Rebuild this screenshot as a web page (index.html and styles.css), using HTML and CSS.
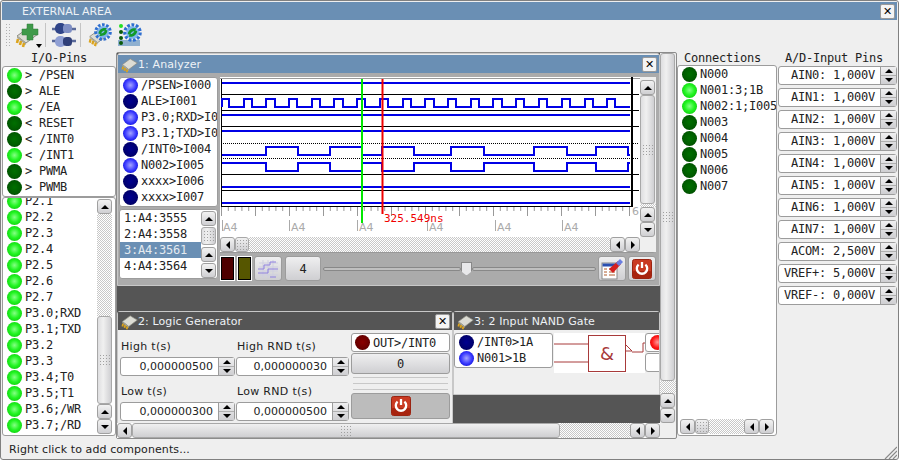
FILE: index.html

```html
<!DOCTYPE html>
<html lang="en">
<head>
  <meta charset="UTF-8" />
  <title>EXTERNAL AREA</title>
  <link rel="stylesheet" href="styles.css">
</head>
<body>
<svg class="defs" width="0" height="0">
  <symbol id="chip" viewBox="0 0 24 24">
    <polygon points="2,12 13,4 23,10 11,19" fill="#dcdcd4" stroke="#8a8a80"/>
    <polygon points="2,12 11,19 11,21 2,14" fill="#a8a89c"/>
    <path d="M3 15l-1 4M6 17l-1 4M9 19l-1 4" stroke="#dba41e" stroke-width="2.600"/>
  </symbol>
  <symbol id="gear" viewBox="0 0 24 24">
    <circle cx="12" cy="12" r="9.500" fill="none" stroke="#2f6fd0" stroke-width="4.500" stroke-dasharray="3.400 2"/>
    <circle cx="12" cy="12" r="8" fill="#7fb4ec"/>
    <path d="M6 14c1-6 6-8 11-7l-2 3c-3 0-5 2-6 5zM18 10c-1 6-6 8-11 7l2-3c3 0 5-2 6-5z" fill="#129a2a"/>
  </symbol>
  <symbol id="power" viewBox="0 0 20 20">
    <rect x="0.500" y="0.500" width="19" height="19" rx="2" fill="#c93a22" stroke="#9a2412"/>
    <rect x="1" y="12" width="18" height="7" rx="1" fill="#a8240f"/>
    <path d="M6.600 5.600a5.200 5.200 0 1 0 6.800 0" fill="none" stroke="#fff" stroke-width="2.300"/>
    <path d="M10 3v6" stroke="#fff" stroke-width="2.300"/>
  </symbol>
</svg>

<div class="win">
  <header class="titlebar">
    <span class="title-text main-title">EXTERNAL AREA</span>
    <span class="close">✕</span>
  </header>

  <div class="toolbar">
    <span class="handle"></span>
    <svg class="tb-icon first" width="26" height="26" viewBox="0 0 26 26">
      <use href="#chip" x="0" y="2" width="24" height="24"/>
      <path d="M12 2h6v5h5v6h-5v5h-6v-5H7V7h5z" fill="#3f9a4a" stroke="#2f7a3a" stroke-width=".5"/>
    </svg>
    <span class="drop"></span>
    <span class="tb-sep"></span>
    <svg class="tb-icon plug" width="24" height="24" viewBox="0 0 24 24">
      <path d="M0 6h5M18 6h6" stroke="#5a6a9a" stroke-width="2.500"/>
      <rect x="3" y="0" width="11" height="11" rx="5" fill="#2f4488"/>
      <rect x="11" y="1" width="9" height="9" rx="3.500" fill="#7f8fc4"/>
      <path d="M0 18h5M18 18h6" stroke="#5a6a9a" stroke-width="2.500"/>
      <rect x="3" y="13" width="11" height="11" rx="5" fill="#8f9fd4"/>
      <rect x="11" y="14" width="9" height="9" rx="3.500" fill="#2f3f78"/>
    </svg>
    <span class="tb-sep"></span>
    <svg class="tb-icon chip-gear" width="24" height="24" viewBox="0 0 24 24">
      <use href="#chip" x="0" y="3" width="21" height="21"/>
      <use href="#gear" x="6" y="0" width="18" height="18"/>
    </svg>
    <svg class="tb-icon led-gear" width="24" height="24" viewBox="0 0 24 24">
      <rect x="0" y="17" width="22" height="6" fill="#8fb0d0"/>
      <circle cx="3" cy="3" r="2" fill="#22e022"/>
      <circle cx="3" cy="9" r="2" fill="#0a5a0a"/>
      <circle cx="3" cy="15" r="2" fill="#0a5a0a"/>
      <circle cx="3" cy="20" r="2" fill="#0a5a0a"/>
      <use href="#gear" x="5" y="0" width="19" height="19"/>
    </svg>
  </div>

  <div class="main">
    <div class="left">
      <div class="col-label center">I/O-Pins</div>
      <div class="list ext-pins">
        <div class="row"><i class="led on"></i>&gt; /PSEN</div>
        <div class="row"><i class="led off"></i>&gt; ALE</div>
        <div class="row"><i class="led on"></i>&lt; /EA</div>
        <div class="row"><i class="led off"></i>&lt; RESET</div>
        <div class="row"><i class="led off"></i>&lt; /INT0</div>
        <div class="row"><i class="led on"></i>&lt; /INT1</div>
        <div class="row"><i class="led off"></i>&gt; PWMA</div>
        <div class="row"><i class="led off"></i>&gt; PWMB</div>
      </div>
      <div class="list port-pins">
        <div class="port-rows">
          <div class="row"><i class="led on"></i>P2.1</div>
          <div class="row"><i class="led on"></i>P2.2</div>
          <div class="row"><i class="led on"></i>P2.3</div>
          <div class="row"><i class="led on"></i>P2.4</div>
          <div class="row"><i class="led on"></i>P2.5</div>
          <div class="row"><i class="led on"></i>P2.6</div>
          <div class="row"><i class="led on"></i>P2.7</div>
          <div class="row"><i class="led on"></i>P3.0;RXD</div>
          <div class="row"><i class="led on"></i>P3.1;TXD</div>
          <div class="row"><i class="led on"></i>P3.2</div>
          <div class="row"><i class="led on"></i>P3.3</div>
          <div class="row"><i class="led on"></i>P3.4;T0</div>
          <div class="row"><i class="led on"></i>P3.5;T1</div>
          <div class="row"><i class="led on"></i>P3.6;/WR</div>
          <div class="row"><i class="led on"></i>P3.7;/RD</div>
        </div>
        <div class="vscroll port-scroll">
          <span class="sb up"></span>
          <span class="trough t-port"></span>
          <span class="thumb t-grow"><b class="grip"></b></span>
          <span class="sb up"></span>
          <span class="sb down"></span>
        </div>
      </div>
    </div>

    <div class="mdi">
      <div class="desk">

        <section class="sub w-analyzer">
          <div class="subtitle active">
            <svg class="chip-ico" width="17" height="17"><use href="#chip"/></svg>
            <span class="title-text">1: Analyzer</span>
            <span class="close">✕</span>
          </div>
          <div class="an-body">
            <div class="an-left">
              <div class="list an-pins">
                <div class="row"><i class="led b-on"></i>/PSEN&gt;I000</div>
                <div class="row"><i class="led b-off"></i>ALE&gt;I001</div>
                <div class="row"><i class="led b-on"></i>P3.0;RXD&gt;I002</div>
                <div class="row"><i class="led b-on"></i>P3.1;TXD&gt;I003</div>
                <div class="row"><i class="led b-off"></i>/INT0&gt;I004</div>
                <div class="row"><i class="led b-on"></i>N002&gt;I005</div>
                <div class="row"><i class="led b-off"></i>xxxx&gt;I006</div>
                <div class="row"><i class="led b-off"></i>xxxx&gt;I007</div>
              </div>
              <div class="list an-marks">
                <div class="mark-rows">
                  <div class="row">1:A4:3555</div>
                  <div class="row">2:A4:3558</div>
                  <div class="row selected">3:A4:3561</div>
                  <div class="row">4:A4:3564</div>
                </div>
                <div class="vscroll">
                  <span class="sb up"></span>
                  <span class="thumb t-grow"><b class="grip"></b></span>
                  <span class="sb up"></span>
                  <span class="sb down"></span>
                </div>
              </div>
            </div>
            <div class="an-right">
              <div class="plot">
                <svg class="wave" width="420" height="160" viewBox="220 77 420 160">
                  <rect x="220" y="77" width="420" height="160" fill="#fff"/>
                  <path d="M220 78.500H640" stroke="#999"/>
                  <path d="M221 94.500H639M221 110.500H639M221 126.500H639M221 174.500H639M221 190.500H639M221 206.500H632" stroke="#000"/>
                  <path d="M221 143.500H639M221 158.500H639" stroke="#000" stroke-dasharray="1 1"/>
                  <path d="M221.500 79V207" stroke="#000"/>
                  <g class="trace">
                    <path d="M222 83H630M222 115H630M222 131H630M222 187H630M222 203H630"/>
                    <path d="M222 107V99H229V107H244V99H252V107H266V99H275V107H289V99H297V107H312V99H320V107H334V99H343V107H357V99H365V107H380V99H388V107H403V99H411V107H425V99H434V107H448V99H456V107H471V99H479V107H493V99H502V107H516V99H524V107H539V99H547V107H562V99H570V107H585V99H593V107H607V99H615V107H630"/>
                    <path d="M222 155H266V147H298V155H330V147H362V155H382V147H414V155H451V147H484V155H534V147H567V155H596V147H628V155H630"/>
                    <path d="M222 163H266V171H298V163H330V171H362V163H382V171H414V163H451V171H484V163H534V171H567V163H596V171H628V163H630"/>
                  </g>
                  <rect x="631" y="77" width="2" height="130" fill="#000"/>
                  <line class="tick" x1="221" x2="632" y1="209" y2="209" stroke-width="4" stroke-dasharray="1 5.800"/>
                  <line class="tick" x1="221" x2="632" y1="213" y2="213" stroke-width="6" stroke-dasharray="1 33"/>
                  <path d="M222.500 220V231M289.500 220V231M357.500 220V231M427.500 220V231M495.500 220V231M562.500 220V231" stroke="#aaa"/>
                  <text class="ruler" x="223" y="231">A4</text>
                  <text class="ruler" x="291" y="231">A4</text>
                  <text class="ruler" x="359" y="231">A4</text>
                  <text class="ruler" x="429" y="231">A4</text>
                  <text class="ruler" x="497" y="231">A4</text>
                  <text class="ruler" x="564" y="231">A4</text>
                  <text class="ruler" x="632" y="215">6</text>
                  <rect x="361" y="79" width="2" height="144" fill="#00e800"/>
                  <rect x="381.500" y="79" width="2" height="135" fill="#f00000"/>
                  <text class="cursor-time" x="384" y="222">325.549ns</text>
                </svg>
                <div class="vscroll an-v">
                  <span class="sb up"></span>
                  <span class="thumb t-grow"><b class="grip"></b></span>
                  <span class="trough t-2"></span>
                  <span class="sb up"></span>
                  <span class="sb down"></span>
                </div>
                <div class="hscroll an-h">
                  <span class="sb lf"></span>
                  <span class="thumb t-h20"><b class="grip"></b></span>
                  <span class="trough t-grow"></span>
                  <span class="sb lf"></span>
                  <span class="sb rt"></span>
                </div>
                <span class="corner"></span>
              </div>
              <div class="an-ctrl">
                <span class="swatch sw-red"></span>
                <span class="swatch sw-olive"></span>
                <span class="btn b-icon">
                  <svg width="24" height="20" viewBox="0 0 24 20">
                    <path d="M3 4H22M3 8H22M3 12H22M3 16H22M7 1V19M12 1V19M17 1V19" stroke="#cfcfe0"/>
                    <path d="M2 10H8V6H14V3H20M2 14H12V10H22M14 18H20" fill="none" stroke="#8f80e0"/>
                  </svg>
                </span>
                <span class="btn num">4</span>
                <span class="slider">
                  <span class="groove g-left"></span>
                  <span class="slide-thumb"></span>
                  <span class="groove"></span>
                </span>
                <span class="btn b-icon">
                  <svg width="24" height="22" viewBox="0 0 24 22">
                    <rect x="2" y="5" width="15" height="16" fill="#fff" stroke="#888"/>
                    <rect x="2.500" y="5.500" width="14" height="3" fill="#2a4fb0"/>
                    <path d="M4 11h3M9 11h6M4 14h3M9 14h6M4 17h3M9 17h6" stroke="#b05a2a"/>
                    <path d="M9 11L18 3l3 3-8 9z" fill="#d42020"/>
                    <path d="M16 5l4-4 3 3-4 4z" fill="#6a7fe0"/>
                  </svg>
                </span>
                <span class="btn b-icon">
                  <svg width="20" height="20"><use href="#power"/></svg>
                </span>
              </div>
            </div>
          </div>
        </section>

        <section class="sub w-logic">
          <div class="subtitle">
            <svg class="chip-ico" width="17" height="17"><use href="#chip"/></svg>
            <span class="title-text">2: Logic Generator</span>
            <span class="close">✕</span>
          </div>
          <div class="lg-body">
            <div class="lg-fields">
              <div class="field">
                <label>High t(s)</label>
                <div class="spin"><span class="spin-val">0,000000500</span><span class="spin-btns"><b class="up"></b><b class="down"></b></span></div>
              </div>
              <div class="field">
                <label>High RND t(s)</label>
                <div class="spin"><span class="spin-val">0,000000030</span><span class="spin-btns"><b class="up"></b><b class="down"></b></span></div>
              </div>
              <div class="field">
                <label>Low t(s)</label>
                <div class="spin"><span class="spin-val">0,000000300</span><span class="spin-btns"><b class="up"></b><b class="down"></b></span></div>
              </div>
              <div class="field">
                <label>Low RND t(s)</label>
                <div class="spin"><span class="spin-val">0,000000500</span><span class="spin-btns"><b class="up"></b><b class="down"></b></span></div>
              </div>
            </div>
            <div class="lg-side">
              <div class="list out-pin"><div class="row"><i class="led r-off"></i>OUT&gt;/INT0</div></div>
              <span class="btn lg-zero">0</span>
              <span class="lines"></span>
              <span class="btn lg-power"><svg width="20" height="20"><use href="#power"/></svg></span>
            </div>
          </div>
        </section>

        <section class="sub w-gate">
          <div class="subtitle">
            <svg class="chip-ico" width="17" height="17"><use href="#chip"/></svg>
            <span class="title-text">3: 2 Input NAND Gate</span>
          </div>
          <div class="gate-body">
            <div class="list gate-pins">
              <div class="row"><i class="led b-off"></i>/INT0&gt;1A</div>
              <div class="row"><i class="led b-on"></i>N001&gt;1B</div>
            </div>
            <svg class="gate" width="91" height="40" viewBox="0 0 91 40">
              <rect width="91" height="40" fill="#fff"/>
              <path d="M0 11H34M0 29H34" stroke="#a83a3a" fill="none"/>
              <rect x="34.500" y="2.500" width="37" height="36" fill="#fff" stroke="#a83a3a"/>
              <text class="amp" x="53" y="27">&amp;</text>
              <path d="M72 12l6 6h-6M78 19H89V10H91" stroke="#a83a3a" fill="none"/>
            </svg>
            <div class="gate-out">
              <div class="list out-box"><i class="led r-on"></i></div>
              <div class="list out-box"></div>
            </div>
          </div>
        </section>

      </div>
      <div class="vscroll mdi-v">
        <span class="thumb t-grow"><b class="grip"></b></span>
        <span class="trough t-mdi"></span>
        <span class="sb up"></span>
        <span class="sb down"></span>
      </div>
      <div class="hscroll mdi-h">
        <span class="sb lf"></span>
        <span class="thumb t-grow"><b class="grip"></b></span>
        <span class="trough t-h70"></span>
        <span class="sb lf"></span>
        <span class="sb rt"></span>
      </div>
    </div>

    <div class="conn">
      <div class="col-label pad">Connections</div>
      <div class="list conn-list">
        <div class="row"><i class="led off"></i>N000</div>
        <div class="row"><i class="led on"></i>N001:3;1B</div>
        <div class="row"><i class="led on"></i>N002:1;I005</div>
        <div class="row"><i class="led off"></i>N003</div>
        <div class="row"><i class="led off"></i>N004</div>
        <div class="row"><i class="led off"></i>N005</div>
        <div class="row"><i class="led off"></i>N006</div>
        <div class="row"><i class="led off"></i>N007</div>
        <div class="hscroll conn-h">
          <span class="sb lf"></span>
          <span class="thumb t-h34"><b class="grip"></b></span>
          <span class="trough t-grow"></span>
          <span class="sb lf"></span>
          <span class="sb rt"></span>
        </div>
      </div>
    </div>

    <div class="adc">
      <div class="col-label pad">A/D-Input Pins</div>
      <div class="spin adc-spin"><span class="spin-val">AIN0: 1,000V</span><span class="spin-btns"><b class="up"></b><b class="down"></b></span></div>
      <div class="spin adc-spin"><span class="spin-val">AIN1: 1,000V</span><span class="spin-btns"><b class="up"></b><b class="down"></b></span></div>
      <div class="spin adc-spin"><span class="spin-val">AIN2: 1,000V</span><span class="spin-btns"><b class="up"></b><b class="down"></b></span></div>
      <div class="spin adc-spin"><span class="spin-val">AIN3: 1,000V</span><span class="spin-btns"><b class="up"></b><b class="down"></b></span></div>
      <div class="spin adc-spin"><span class="spin-val">AIN4: 1,000V</span><span class="spin-btns"><b class="up"></b><b class="down"></b></span></div>
      <div class="spin adc-spin"><span class="spin-val">AIN5: 1,000V</span><span class="spin-btns"><b class="up"></b><b class="down"></b></span></div>
      <div class="spin adc-spin"><span class="spin-val">AIN6: 1,000V</span><span class="spin-btns"><b class="up"></b><b class="down"></b></span></div>
      <div class="spin adc-spin"><span class="spin-val">AIN7: 1,000V</span><span class="spin-btns"><b class="up"></b><b class="down"></b></span></div>
      <div class="spin adc-spin"><span class="spin-val">ACOM: 2,500V</span><span class="spin-btns"><b class="up"></b><b class="down"></b></span></div>
      <div class="spin adc-spin"><span class="spin-val">VREF+: 5,000V</span><span class="spin-btns"><b class="up"></b><b class="down"></b></span></div>
      <div class="spin adc-spin"><span class="spin-val">VREF-: 0,000V</span><span class="spin-btns"><b class="up"></b><b class="down"></b></span></div>
    </div>
  </div>

  <footer class="status">
    <span>Right click to add components...</span>
    <svg class="size-grip" width="13" height="13" viewBox="0 0 13 13">
      <path d="M1 13L13 1M5 13L13 5M9 13L13 9" stroke="#8a8a8a" stroke-width="1.200"/>
    </svg>
  </footer>
</div>
</body>
</html>
```

FILE: styles.css

```css
* {
  box-sizing: border-box;
}
html, body {
  margin: 0;
  background: #fff;
}
.defs {
  position: absolute;
}
.win {
  width: 899px;
  height: 460px;
  border: 1px solid #808080;
  border-radius: 3px;
  padding: 1px 1px 0;
  background: #efefef;
  font-family: "DejaVu Sans", sans-serif;
  font-size: 11px;
  color: #222;
  overflow: hidden;
}

/* title bars */
.titlebar {
  height: 18px;
  background: #6a8fb4;
  display: flex;
  align-items: center;
  justify-content: space-between;
  padding: 0 2px 0 20px;
}
.title-text {
  color: #eef2f6;
  font-size: 11px;
  letter-spacing: 0.1px;
}
.main-title {
  letter-spacing: -0.1px;
}
.close {
  width: 15px;
  height: 15px;
  background: #f4f4f4;
  border: 1px solid #999;
  border-radius: 2px;
  color: #000;
  font-size: 11px;
  line-height: 13px;
  text-align: center;
}

/* toolbar */
.toolbar {
  height: 30px;
  display: flex;
  align-items: center;
  padding-left: 3px;
}
.handle {
  width: 6px;
  height: 24px;
  background: radial-gradient(#b0b0b0 0.8px, transparent 1px) 0 0/3px 3px;
}
.tb-icon.first {
  margin-left: 4px;
}
.drop {
  width: 0;
  height: 0;
  margin: 22px 0 0 -5px;
  border: 3px solid transparent;
  border-top: 4px solid #000;
  border-bottom: 0;
}
.tb-sep {
  width: 1px;
  height: 24px;
  background: #c4c4c4;
  margin-left: 3px;
}
.plug {
  margin-left: 6px;
}
.plug + .tb-sep {
  margin-left: 4px;
}
.chip-gear {
  margin-left: 7px;
}
.led-gear {
  margin-left: 6px;
}

/* columns */
.main {
  display: flex;
  height: 389px;
}
.left {
  width: 114px;
  display: flex;
  flex-direction: column;
}
.col-label {
  height: 16px;
  font-family: "DejaVu Sans Mono", monospace;
  font-size: 12px;
  letter-spacing: -0.22px;
  line-height: 17px;
}
.center {
  text-align: center;
}
.pad {
  padding-left: 7px;
}

/* lists */
.list {
  background: #fff;
  border: 1px solid #9c9c9c;
  border-radius: 3px;
  font-family: "DejaVu Sans Mono", monospace;
  font-size: 12px;
  letter-spacing: -0.22px;
  overflow: hidden;
}
.row {
  height: 16px;
  display: flex;
  align-items: center;
  gap: 3px;
  padding-left: 4px;
  white-space: nowrap;
  flex: none;
}
.ext-pins {
  height: 131px;
}
.port-pins {
  height: 239px;
  display: flex;
}
.port-rows {
  flex: 1;
  margin-top: -5px;
}
.led {
  width: 15px;
  height: 15px;
  border-radius: 50%;
  flex: none;
  display: block;
}
.on {
  background: radial-gradient(circle at 50% 48%, #86ff86 0, #22f522 45%, #0fd00f 78%, #3c9a3c 100%);
}
.off {
  background: radial-gradient(circle at 50% 48%, #007000 0, #005c00 55%, #003c00 90%, #4a7a4a 100%);
}
.b-on {
  background: radial-gradient(circle at 50% 48%, #a4a4ff 0, #3a3aff 50%, #1010d8 80%, #3c3c9a 100%);
}
.b-off {
  background: radial-gradient(circle at 50% 48%, #000090 0, #00006e 60%, #00004a 90%, #4a4a7a 100%);
}
.r-off {
  background: radial-gradient(circle at 50% 48%, #8a0000 0, #6a0000 60%, #400000 90%, #7a4a4a 100%);
}
.r-on {
  background: radial-gradient(circle at 50% 48%, #ff9a9a 0, #ff1a1a 50%, #d80000 85%, #9a3c3c 100%);
}

/* scrollbars */
.vscroll, .hscroll {
  display: flex;
  flex: none;
}
.vscroll {
  flex-direction: column;
  width: 16px;
}
.hscroll {
  height: 15px;
}
.sb {
  width: 15px;
  height: 15px;
  flex: none;
  border: 1px solid #a0a0a0;
  border-radius: 3px;
  background: linear-gradient(#f2f2f2, #cfcfd2);
  display: flex;
  align-items: center;
  justify-content: center;
}
.sb::after {
  content: "";
  width: 0;
  height: 0;
  border: 4px solid transparent;
}
.sb.up::after {
  border-top: 0;
  border-bottom: 4px solid #000;
}
.sb.down::after {
  border-bottom: 0;
  border-top: 4px solid #000;
}
.sb.lf::after {
  border-left: 0;
  border-right: 4px solid #000;
}
.sb.rt::after {
  border-right: 0;
  border-left: 4px solid #000;
}
.thumb {
  display: flex;
  align-items: center;
  justify-content: center;
  width: 15px;
  background: linear-gradient(90deg, #dedee0, #f0f0f0 40%, #cfcfd2);
  border: 1px solid #a8a8a8;
  border-radius: 3px;
  flex: none;
}
.hscroll .thumb {
  width: auto;
  background: linear-gradient(#f0f0f0, #cfcfd2);
}
.grip {
  width: 12px;
  height: 12px;
  background: radial-gradient(#a0a0a0 0.7px, transparent 1px) 0 0/3px 3px;
}
.trough {
  display: block;
  flex: none;
  background: repeating-conic-gradient(#c8c8c8 0 25%, #fff 0 50%) 0 0/2px 2px;
}
.t-grow {
  flex: 1;
}
.t-port {
  height: 102px;
}
.t-2 {
  height: 3px;
}
.t-mdi {
  height: 12px;
}
.t-h20 {
  width: 21px;
}
.t-h34 {
  width: 34px;
}
.t-h70 {
  width: 70px;
}
.port-scroll {
  margin: 1px 3px 1px 0;
  width: 15px;
}

/* workspace */
.mdi {
  width: 561px;
  height: 387px;
  margin-top: 2px;
  border: 1px solid #8c8c8c;
  border-radius: 2px;
  display: grid;
  grid-template-columns: 543px 16px;
  grid-template-rows: 370px 15px;
  background: #efefef;
}
.desk {
  position: relative;
  background: #555;
  overflow: hidden;
}
.mdi-h {
  background: #fff;
}
.sub {
  position: absolute;
  background: #efefef;
  border: 1px solid #c8c8c8;
  border-radius: 3px 3px 0 0;
}
.subtitle {
  height: 18px;
  background: #555;
  display: flex;
  align-items: center;
  padding: 0 2px 0 3px;
  position: relative;
}
.subtitle.active {
  background: #6a8fb4;
}
.subtitle .close {
  margin-left: auto;
}
.chip-ico {
  flex: none;
}
.w-analyzer {
  left: 0;
  top: 0;
  width: 543px;
  height: 233px;
  padding-top: 1px;
}
.w-logic {
  left: 0;
  top: 258px;
  width: 336px;
  height: 114px;
}
.w-gate {
  left: 336px;
  top: 258px;
  width: 207px;
  height: 84px;
}

/* analyzer */
.an-body {
  height: 212px;
  background: #ababab;
  display: flex;
  padding: 4px 0 0 1px;
  gap: 2px;
}
.an-left {
  width: 99px;
  display: flex;
  flex-direction: column;
  gap: 2px;
}
.an-pins {
  height: 130px;
}
.an-pins .row:first-child {
  margin-top: -1px;
}
.an-pins .row, .out-pin .row {
  padding-left: 3px;
}
.an-marks {
  height: 70px;
  display: flex;
}
.mark-rows {
  width: 81px;
  flex: none;
}
.an-marks .vscroll {
  padding-top: 1px;
  gap: 1px;
}
.an-marks .t-grow {
  flex: none;
  height: 18px;
  margin-bottom: 1px;
}
.selected {
  background: #6a8fb4;
  color: #e4eaf0;
}
.an-right {
  width: 436px;
  display: flex;
  flex-direction: column;
}
.plot {
  display: grid;
  grid-template-columns: 420px 16px;
  grid-template-rows: 160px 15px;
  background: #fff;
  border-radius: 0 0 3px 0;
  border-bottom: 1px solid #999;
  height: 176px;
}
.wave {
  display: block;
}
.trace {
  fill: none;
  stroke: #0000e6;
  stroke-width: 2;
}
.tick {
  stroke: #999;
}
.ruler {
  font-family: "DejaVu Sans", sans-serif;
  font-size: 11px;
  fill: #aaa;
}
.cursor-time {
  font-family: "DejaVu Sans Mono", monospace;
  font-size: 11px;
  fill: #f00000;
}
.an-v {
  padding-top: 3px;
  background: #efefef;
}
.an-h {
  background: #fff;
}
.corner {
  background: #efefef;
}
.an-ctrl {
  display: flex;
  align-items: flex-start;
  gap: 2px;
  padding-top: 3px;
  height: 32px;
}
.swatch {
  width: 15px;
  height: 25px;
  border: 1px solid #fff;
  outline: 1px solid #000;
  outline-offset: -2px;
}
.sw-red {
  background: #4e0000;
}
.sw-olive {
  background: #565600;
}
.btn {
  display: flex;
  align-items: center;
  justify-content: center;
  background: linear-gradient(#efeff0, #cfcfd2);
  border: 1px solid #9c9c9c;
  border-radius: 3px;
  font-family: "DejaVu Sans Mono", monospace;
  font-size: 12px;
  height: 25px;
  flex: none;
}
.b-icon {
  width: 28px;
}
.num {
  width: 36px;
  margin-left: 1px;
}
.slider {
  flex: 1;
  display: flex;
  align-items: center;
  height: 25px;
}
.groove {
  flex: 1;
  height: 4px;
  background: #c0c0c0;
  border: 1px solid #888;
  border-radius: 2px;
}
.g-left {
  flex: none;
  width: 138px;
}
.slide-thumb {
  width: 11px;
  height: 14px;
  flex: none;
  background: #e8e8ea;
  border: 1px solid #888;
  clip-path: polygon(0 0, 100% 0, 100% 70%, 50% 100%, 0 70%);
}

/* logic generator */
.lg-body {
  display: flex;
  padding: 8px 0 0 2px;
  gap: 2px;
}
.lg-fields {
  width: 229px;
  display: grid;
  grid-template-columns: 115px 113px;
  column-gap: 1px;
  row-gap: 7px;
}
.field label {
  display: block;
  height: 15px;
  line-height: 17px;
  margin-bottom: 4px;
  padding-left: 1px;
  letter-spacing: 0.3px;
}
.spin {
  height: 19px;
  display: flex;
  background: #fff;
  border: 1px solid #9c9c9c;
  border-radius: 3px;
  align-items: stretch;
  font-size: 11px;
}
.spin-val {
  flex: 1;
  text-align: right;
  line-height: 17px;
  padding-right: 5px;
  white-space: nowrap;
}
.spin-btns {
  width: 16px;
  flex: none;
  display: flex;
  flex-direction: column;
  background: linear-gradient(#efeff0, #cfcfd2);
  border-left: 1px solid #9c9c9c;
}
.spin-btns b {
  flex: 1;
  display: flex;
  align-items: center;
  justify-content: center;
}
.spin-btns b + b {
  border-top: 1px solid #b0b0b0;
}
.spin-btns b::after {
  content: "";
  border: 4px solid transparent;
  border-top: 0;
  border-bottom: 4px solid #000;
}
.spin-btns b.down::after {
  border: 4px solid transparent;
  border-bottom: 0;
  border-top: 4px solid #000;
}
.lg-side {
  width: 99px;
  margin-top: -5px;
  display: flex;
  flex-direction: column;
}
.out-pin {
  height: 19px;
  flex: none;
}
.out-pin .row {
  height: 17px;
}
.lg-zero {
  height: 21px;
  margin-top: 1px;
}
.lines {
  height: 14px;
  margin: 3px 2px 2px;
  background:
    linear-gradient(#c8c8c8, #c8c8c8) 0 0/100% 1px no-repeat,
    linear-gradient(#c8c8c8, #c8c8c8) 0 6px/100% 1px no-repeat,
    linear-gradient(#c8c8c8, #c8c8c8) 0 12px/100% 1px no-repeat;
}
.lg-power {
  background: #bcbcbc;
  height: 26px;
}

/* nand gate */
.gate-body {
  display: flex;
  padding: 3px 0 0 0;
  overflow: hidden;
  height: 64px;
  align-items: flex-start;
}
.gate-pins {
  width: 99px;
  height: 35px;
  flex: none;
}
.gate {
  flex: none;
  margin-left: 1px;
}
.amp {
  font-family: "DejaVu Sans", sans-serif;
  font-size: 18px;
  fill: #a83a3a;
  text-anchor: middle;
}
.gate-out {
  width: 40px;
  flex: none;
  display: flex;
  flex-direction: column;
  gap: 1px;
}
.out-box {
  height: 19px;
  padding: 1px 0 0 4px;
}

/* right columns */
.conn {
  width: 100px;
  display: flex;
  flex-direction: column;
}
.conn-list {
  height: 371px;
  margin-top: -1px;
  display: flex;
  flex-direction: column;
}
.conn-h {
  margin: auto 2px 1px;
}
.adc {
  width: 119px;
  margin-left: 1px;
  display: flex;
  flex-direction: column;
  gap: 3px;
}
.adc .col-label {
  margin-bottom: -3px;
}
.adc-spin {
  flex: none;
  font-family: "DejaVu Sans Mono", monospace;
  font-size: 12px;
  letter-spacing: -0.22px;
}

/* status */
.status {
  height: 20px;
  display: flex;
  align-items: center;
  justify-content: space-between;
  padding: 0 0 0 7px;
  letter-spacing: 0.1px;
}
.size-grip {
  align-self: flex-end;
}
```
